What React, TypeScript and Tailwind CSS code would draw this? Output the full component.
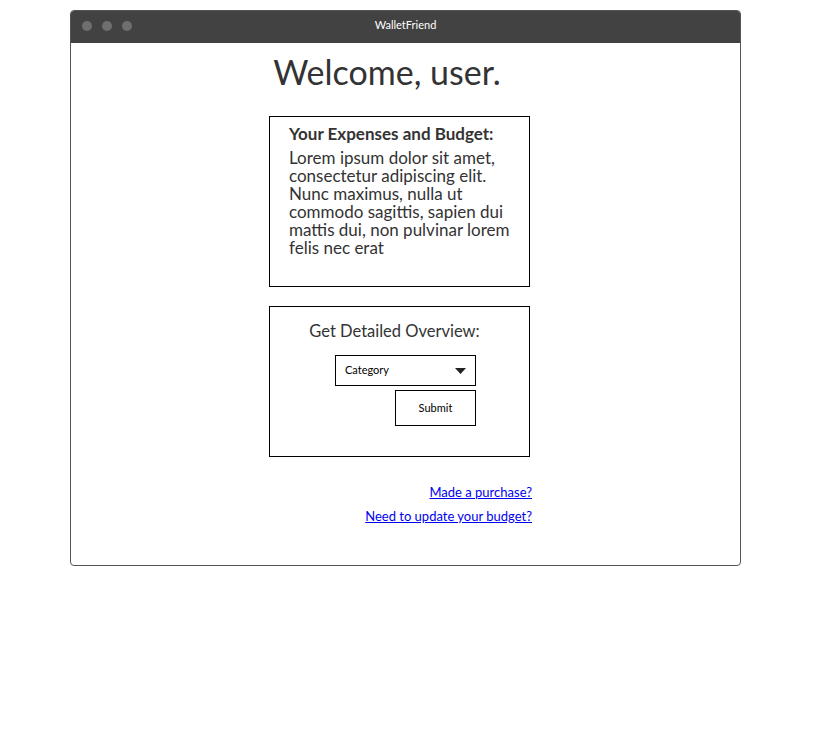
export default function App() {
  const lines = [
    "Lorem ipsum dolor sit amet,",
    "consectetur adipiscing elit.",
    "Nunc maximus, nulla ut",
    "commodo sagittis, sapien dui",
    "mattis dui, non pulvinar lorem",
    "felis nec erat",
  ];

  return (
    <div className="min-h-screen bg-white font-['Lato',sans-serif] text-[#333]">
      <div className="pt-[10px] pl-[70px]">
        <div className="w-[671px] h-[556px] border border-[#555] rounded-[4px] overflow-hidden flex flex-col">
          {/* title bar */}
          <div className="h-[32px] bg-[#424242] flex items-center relative shrink-0 pb-[3px]">
            <div className="flex gap-[10px] pl-[11px]">
              <span className="w-[10px] h-[10px] rounded-full bg-[#6f6f6f]" />
              <span className="w-[10px] h-[10px] rounded-full bg-[#6f6f6f]" />
              <span className="w-[10px] h-[10px] rounded-full bg-[#6f6f6f]" />
            </div>
            <div className="absolute inset-0 flex items-center justify-center pb-[3px] text-[11px] text-white">
              WalletFriend
            </div>
          </div>

          {/* body */}
          <div className="pl-[198px] pt-[7px]">
            <div className="w-[264px] flex flex-col">
              <h1 className="text-[34px] leading-[43px] text-center pr-[28px] text-[#333]">
                Welcome, user.
              </h1>

              <div className="mt-[23px] w-[261px] h-[171px] border border-black pl-[19px] pt-[5px]">
                <div className="text-[17px] font-bold leading-[24px] whitespace-nowrap">
                  Your Expenses and Budget:
                </div>
                <div className="mt-[3px] text-[17px] leading-[18px] whitespace-nowrap">
                  {lines.map((l) => (
                    <div key={l}>{l}</div>
                  ))}
                </div>
              </div>

              <div className="mt-[19px] w-[261px] h-[151px] border border-black flex flex-col items-center pt-[13px]">
                <div className="text-[16.5px] leading-[22px] text-center pr-[10px]">
                  Get Detailed Overview:
                </div>
                <div className="w-full flex flex-col items-end pr-[53px] mt-[13px]">
                  <div className="w-[141px] h-[31px] border border-black flex items-center justify-between pl-[9px] pr-[9px] text-[11px] text-black">
                    <span>Category</span>
                    <svg width="11" height="6" viewBox="0 0 11 6">
                      <path d="M0 0 L11 0 L5.5 6 Z" fill="#222" />
                    </svg>
                  </div>
                  <button className="mt-[4px] w-[81px] h-[36px] border border-black text-[11px] text-black bg-white">
                    Submit
                  </button>
                </div>
              </div>

              <div className="mt-[27px] flex flex-col items-end gap-[8px] pr-[1px] text-[13px] leading-[16px]">
                <a href="#" className="text-[#0000ee] underline">
                  Made a purchase?
                </a>
                <a href="#" className="text-[#0000ee] underline">
                  Need to update your budget?
                </a>
              </div>
            </div>
          </div>
        </div>
      </div>
    </div>
  );
}
